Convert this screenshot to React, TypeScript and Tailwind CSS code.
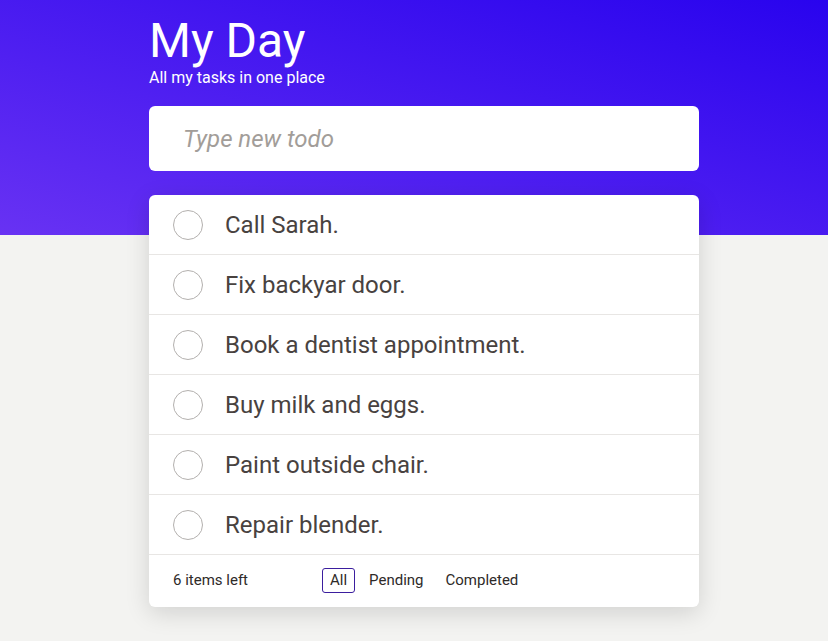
import React from "react";

const todos = [
  "Call Sarah.",
  "Fix backyar door.",
  "Book a dentist appointment.",
  "Buy milk and eggs.",
  "Paint outside chair.",
  "Repair blender.",
];

export default function App() {
  return (
    <div
      className="min-h-screen w-full bg-[#f3f3f1] bg-[linear-gradient(to_top_right,#6832f3,#2903ee)] bg-no-repeat bg-[length:100%_235px] pb-10"
      style={{ fontFamily: "Roboto, 'Noto Sans', sans-serif" }}
    >
      <div className="mx-auto w-[570px] pl-[20px] pt-[17px]">
        <h1 className="text-[48px] leading-none text-white font-normal">My Day</h1>
        <p className="mt-[3px] text-[16px] leading-5 text-white">All my tasks in one place</p>
        <div className="mt-[18px] h-[65px] rounded-md bg-white flex items-center pl-[34px]">
          <input
            className="w-full h-full bg-transparent outline-none text-[24px] italic text-[#444] placeholder:text-[#a29d99]"
            placeholder="Type new todo"
          />
        </div>
        <div className="mt-[24px] rounded-md bg-white shadow-[0_6px_24px_rgba(0,0,0,0.14)]">
          {todos.map((t) => (
            <div
              key={t}
              className="h-[60px] flex items-center pl-6 border-b border-[#e8e6e4]"
            >
              <span className="w-[30px] h-[30px] rounded-full border border-[#b3b0ae] shrink-0" />
              <span className="ml-[22px] text-[24px] text-[#48423f]">{t}</span>
            </div>
          ))}
          <div className="h-[52px] pb-[2px] flex items-center pl-6 text-[15px] text-[#2e2a28]">
            <span className="w-[149px]">6 items left</span>
            <button className="h-[25px] px-[7px] rounded-[3px] border border-[#3b1e9e] leading-none">All</button>
            <button className="ml-[7px] px-[7px] leading-none">Pending</button>
            <button className="ml-[8px] px-[7px] leading-none">Completed</button>
          </div>
        </div>
      </div>
    </div>
  );
}
